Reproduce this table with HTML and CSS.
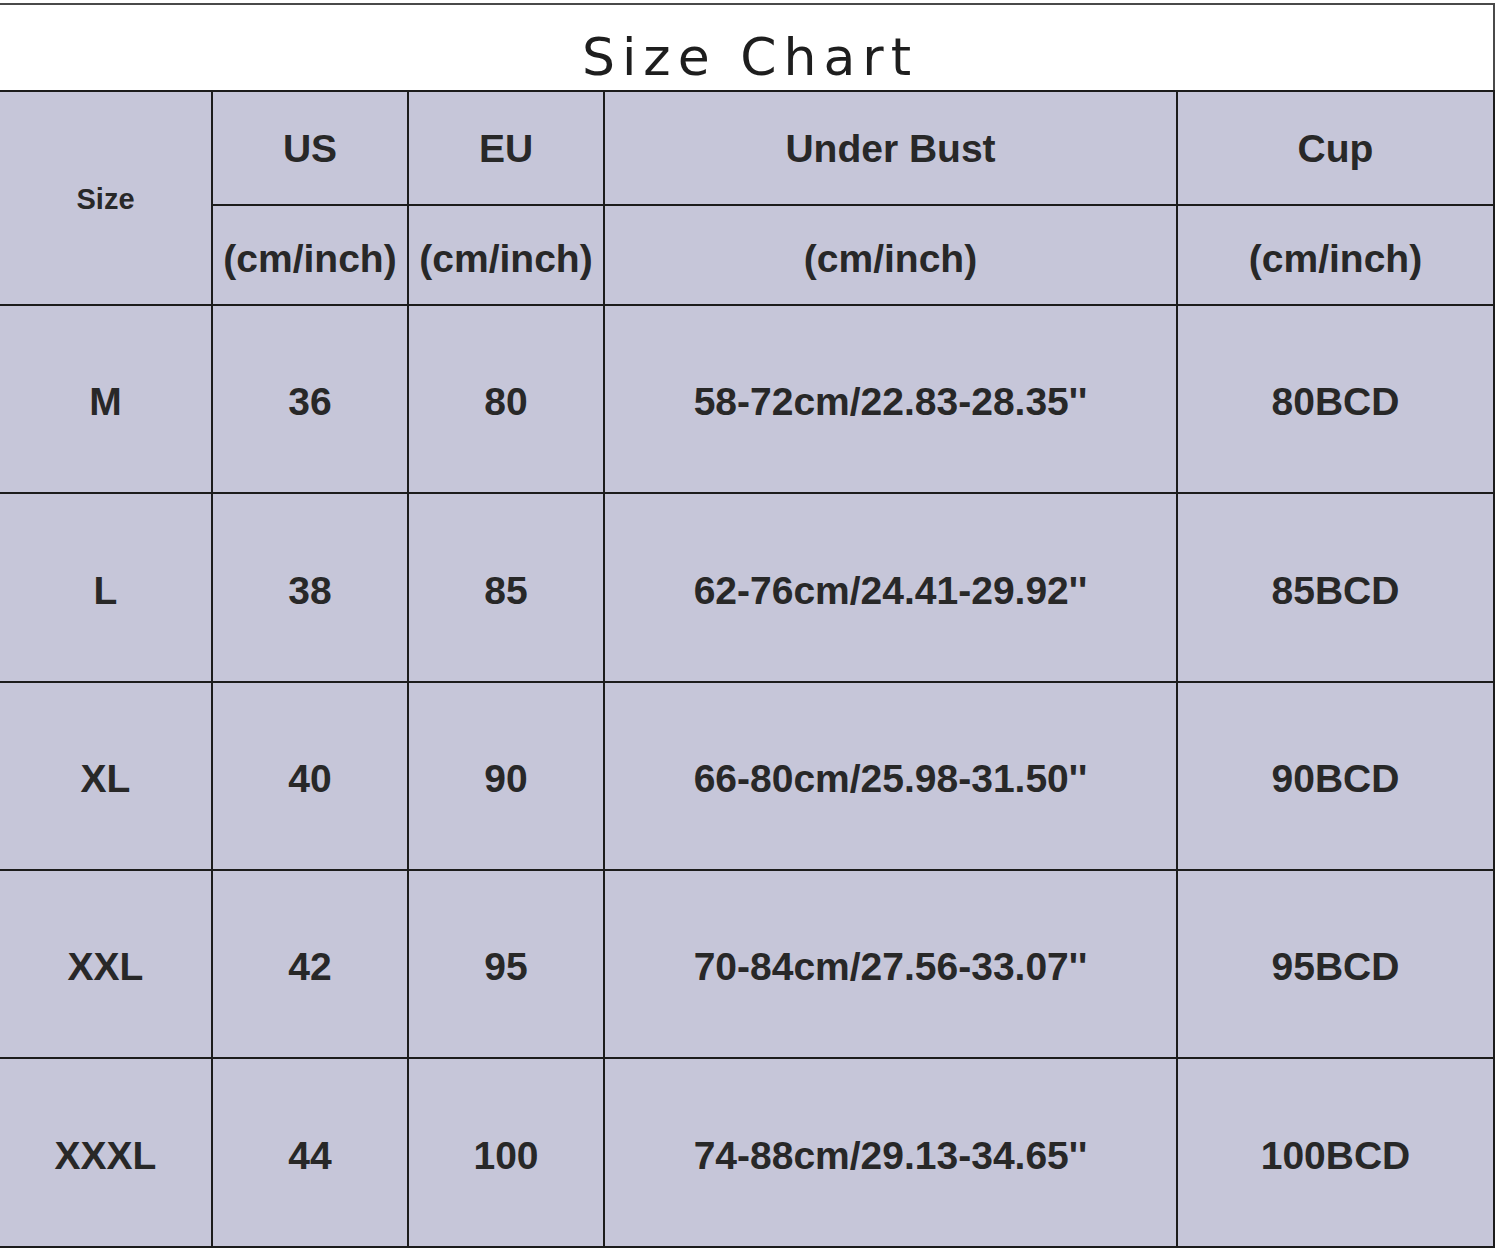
FILE: index.html
```html
<!DOCTYPE html>
<html>
<head>
<meta charset="utf-8">
<link rel="stylesheet" href="styles.css">
</head>
<body>
<div class="chart">
  <div class="title">Size Chart</div>
  <table class="sizes">
    <colgroup>
      <col class="c-size"><col class="c-us"><col class="c-eu"><col class="c-bust"><col class="c-cup">
    </colgroup>
    <tr class="h1">
      <th rowspan="2" class="size-head">Size</th>
      <th>US</th><th>EU</th><th>Under Bust</th><th>Cup</th>
    </tr>
    <tr class="h2">
      <th>(cm/inch)</th><th>(cm/inch)</th><th>(cm/inch)</th><th>(cm/inch)</th>
    </tr>
    <tr class="r-a"><td>M</td><td>36</td><td>80</td><td>58-72cm/22.83-28.35''</td><td>80BCD</td></tr>
    <tr class="r-b"><td>L</td><td>38</td><td>85</td><td>62-76cm/24.41-29.92''</td><td>85BCD</td></tr>
    <tr class="r-a"><td>XL</td><td>40</td><td>90</td><td>66-80cm/25.98-31.50''</td><td>90BCD</td></tr>
    <tr class="r-a"><td>XXL</td><td>42</td><td>95</td><td>70-84cm/27.56-33.07''</td><td>95BCD</td></tr>
    <tr class="r-b"><td>XXXL</td><td>44</td><td>100</td><td>74-88cm/29.13-34.65''</td><td>100BCD</td></tr>
  </table>
</div>
</body>
</html>
```
FILE: styles.css
```css
html, body {
  margin: 0;
  padding: 0;
  background: #ffffff;
}
.chart {
  width: 1495px;
  padding-top: 3px;
}
.title {
  height: 87px;
  box-sizing: border-box;
  border-top: 2px solid #4a4a4a;
  border-right: 2px solid #4a4a4a;
  font-family: "DejaVu Sans", sans-serif;
  font-weight: normal;
  font-size: 52px;
  letter-spacing: 7px;
  line-height: 104px;
  text-align: center;
  color: #1e1e1e;
  padding-left: 7px;
}
.sizes {
  border-collapse: collapse;
  table-layout: fixed;
  width: 1494px;
  background: #c6c6d9;
  font-family: "Liberation Sans", Arial, sans-serif;
  font-weight: bold;
  font-size: 39px;
  color: #282828;
}
.sizes th, .sizes td {
  border: 2px solid #1c1c1c;
  text-align: center;
  vertical-align: middle;
  padding: 0;
  font-weight: bold;
}
.sizes tr > :first-child {
  border-left: none;
}
.c-size { width: 212px; }
.c-us { width: 196px; }
.c-eu { width: 196px; }
.c-bust { width: 573px; }
.c-cup { width: 317px; }
.sizes tr.h1 { height: 114px; }
.sizes tr.h2 { height: 100px; }
.sizes tr.r-a { height: 188px; }
.sizes tr.r-b { height: 189px; }
.h1 th { padding-top: 2px; }
.h2 th { padding-top: 8px; }
.size-head {
  font-size: 29px;
  padding-bottom: 12px;
}
.sizes td { padding-top: 6px; }
```
